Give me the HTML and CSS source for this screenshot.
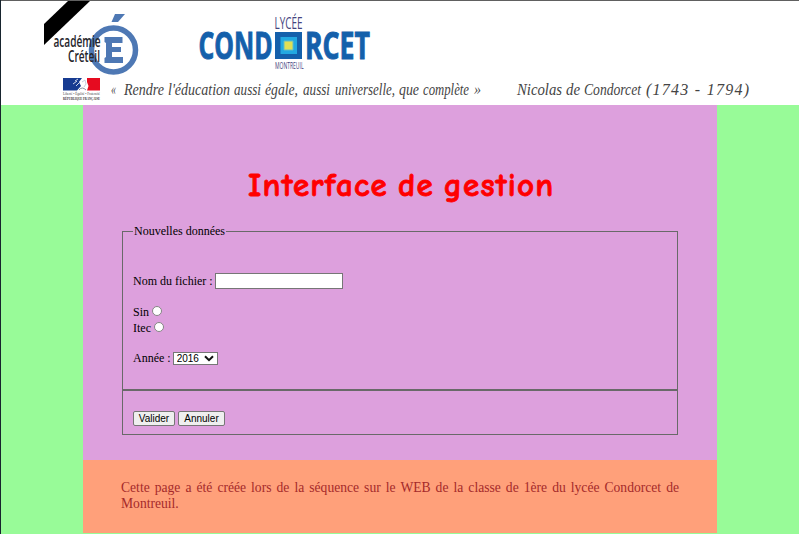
FILE: index.html
```html
<!DOCTYPE html>
<html lang="fr">
<head>
<meta charset="utf-8">
<title>Interface de gestion</title>
<link rel="stylesheet" href="styles.css">
</head>
<body>
<header class="banner">
<svg class="banner-art" width="798" height="104" viewBox="1 1 798 104">
  <path d="M68 1H90L44 45V24Z" fill="#000"/>
  <circle cx="113.500" cy="50" r="22" fill="none" stroke="#4e78b4" stroke-width="5.500"/>
  <path d="M115 14H125L118 22H111.500Z" fill="#4e78b4"/>
  <path d="M104.500 37H122.500V43H112V47H121V52H112V57H123V63H104.500V58L106 57V43L104.500 42Z" fill="#4e78b4"/>
  <g class="academy">
    <text x="53.500" y="46.500" textLength="47" lengthAdjust="spacingAndGlyphs">académie</text>
    <text x="68" y="62" textLength="32" lengthAdjust="spacingAndGlyphs">Créteil</text>
  </g>
  <path d="M63 78H82L79 82L81 86L77 90.500H63Z" fill="#173b91"/>
  <path d="M87 78H100V90.500H87L88.500 86L87 82Z" fill="#e60b20"/>
  <path d="M78 79L75 81M77 81L73 84M79 83L76 86" stroke="#fff" stroke-width=".8"/>
  <path d="M82 82L85 80L86 84L84 87" stroke="#c7cddd" fill="none"/>
  <path d="M79 90Q82 86 86 90" stroke="#87909f" fill="none"/>
  <text class="motto" x="63" y="95" textLength="37" lengthAdjust="spacingAndGlyphs">Liberté • Égalité • Fraternité</text>
  <text class="republic" x="63" y="100" textLength="37" lengthAdjust="spacingAndGlyphs">RÉPUBLIQUE FRANÇAISE</text>
  <text class="school-small" font-size="16.500" x="274.500" y="28.500" textLength="28" lengthAdjust="spacingAndGlyphs">LYCÉE</text>
  <g class="school">
    <text transform="translate(198.500 59) scale(1 1.400)" textLength="74" lengthAdjust="spacingAndGlyphs">COND</text>
    <text transform="translate(305 59) scale(1 1.400)" textLength="65" lengthAdjust="spacingAndGlyphs">RCET</text>
  </g>
  <path d="M275 32H302V59H275Z" fill="#1460ab"/>
  <path d="M280.500 37H297V54H280.500Z" fill="#22a9e1"/>
  <path d="M284 41H293V50H284Z" fill="#dfdf54" stroke="#63bec5"/>
  <text class="school-small" font-size="8.500" x="275" y="68.500" textLength="28.500" lengthAdjust="spacingAndGlyphs">MONTREUIL</text>
  <g class="script">
    <text x="111" y="95" textLength="5" lengthAdjust="spacingAndGlyphs">«</text>
    <text x="124" y="95" textLength="40" lengthAdjust="spacingAndGlyphs">Rendre</text>
    <text x="168" y="95" textLength="62" lengthAdjust="spacingAndGlyphs">l'éducation</text>
    <text x="234" y="95" textLength="27" lengthAdjust="spacingAndGlyphs">aussi</text>
    <text x="265" y="95" textLength="33" lengthAdjust="spacingAndGlyphs">égale,</text>
    <text x="303" y="95" textLength="27" lengthAdjust="spacingAndGlyphs">aussi</text>
    <text x="335" y="95" textLength="60" lengthAdjust="spacingAndGlyphs">universelle,</text>
    <text x="399" y="95" textLength="20" lengthAdjust="spacingAndGlyphs">que</text>
    <text x="423" y="95" textLength="46" lengthAdjust="spacingAndGlyphs">complète</text>
    <text x="474" y="95" textLength="7" lengthAdjust="spacingAndGlyphs">»</text>
    <text x="517" y="95" textLength="45" lengthAdjust="spacingAndGlyphs">Nicolas</text>
    <text x="566" y="95" textLength="14" lengthAdjust="spacingAndGlyphs">de</text>
    <text x="584" y="95" textLength="57" lengthAdjust="spacingAndGlyphs">Condorcet</text>
    <text x="646" y="95" textLength="103" lengthAdjust="spacing">(1743 - 1794)</text>
  </g>
</svg>
</header>
<main class="content">
  <h1 class="title">Interface de gestion</h1>
  <form class="form">
    <fieldset class="data">
      <legend class="legend">Nouvelles données</legend>
      <div class="row file"><label for="file">Nom du fichier :</label><input class="text-input" id="file" type="text"></div>
      <div class="row"><label for="sin">Sin</label><input class="radio" id="sin" type="radio" name="section"></div>
      <div class="row"><label for="itec">Itec</label><input class="radio" id="itec" type="radio" name="section"></div>
      <div class="row year"><label for="year">Année :</label><div class="select-wrap"><select class="select" id="year"><option>2016</option></select><svg class="chevron" width="10" height="7" viewBox="0 0 10 7"><path d="M1 1.200L5 5.200L9 1.200" fill="none" stroke="#111" stroke-width="2"/></svg></div></div>
    </fieldset>
    <fieldset class="actions">
      <button class="button valid" type="button">Valider</button>
      <button class="button cancel" type="button">Annuler</button>
    </fieldset>
  </form>
</main>
<footer class="footer"><p class="note">Cette page a été créée lors de la séquence sur le WEB de la classe de 1ère du lycée Condorcet de Montreuil.</p></footer>
</body>
</html>
```
FILE: styles.css
```css
* { box-sizing: border-box; }
html { background: #98fb98; }
body {
  margin: 0;
  height: 534px;
  overflow: hidden;
  border-left: 1px solid #17242e;
  background: #98fb98;
  font: 12px/16px "Liberation Serif", serif;
  color: #000;
}
.banner { height: 105px; border-top: 1px solid #606060; background: #fff; }
.banner-art { display: block; }
.academy { font: 600 15.5px "Open Sans", sans-serif; fill: #25252b; }
.motto { font: 3.5px "Liberation Serif", serif; fill: #444; }
.republic { font: bold 4.5px "Liberation Serif", serif; fill: #333; }
.school { font: bold 27px "Open Sans", sans-serif; fill: #1460ab; stroke: #1460ab; stroke-width: .7px; }
.school-small { font-family: "Open Sans", sans-serif; fill: #45447e; }
.script { font: italic 16px "Zapfino", "Z003", "URW Chancery L", "Apple Chancery", "Liberation Serif", serif; fill: #444; }
.content {
  width: 634px;
  height: 355px;
  margin-left: 82px;
  padding: 60px 39px 0;
  background: #dda0dd;
}
.title {
  width: 304px;
  height: 40px;
  margin: 0 auto;
  font: bold 33px/40px "Comic Sans MS", "Comic Neue", "DejaVu Sans", sans-serif;
  letter-spacing: 1.2px;
  word-spacing: -3px;
  white-space: nowrap;
  color: red;
  -webkit-text-stroke: .8px red;
}
.form { padding-top: 18px; }
fieldset { width: 556px; margin: 0; border: 1px solid #696969; }
.data { height: 167px; padding: 34px 10px 0; }
.legend { height: 16px; padding: 0 1px; }
.row { display: flex; align-items: center; height: 16px; }
.file { margin-bottom: 15px; gap: 2px; }
.text-input { width: 128px; height: 16px; padding: 0; border: 1px solid #767676; background: #fff; }
.radio { appearance: none; width: 10px; height: 10px; margin: 0 0 2px 3px; border: 1px solid #858585; border-radius: 50%; background: #fff; }
.year { margin-top: 14px; gap: 2px; }
.select-wrap { position: relative; display: flex; }
.select { appearance: none; width: 45px; height: 13px; padding: 0 3px; border: 1px solid #767676; border-radius: 0; background: #fff; font: 10px/11px "Liberation Sans", sans-serif; color: #000; }
.chevron { position: absolute; right: 4px; top: 3px; pointer-events: none; }
.actions { display: flex; gap: 3px; height: 45px; padding: 20px 10px 0; }
.button { height: 15px; padding: 0; border: 1px solid #767676; border-radius: 2px; background: #efefef; font: 10px/13px "Liberation Sans", sans-serif; color: #000; }
.valid { width: 42px; }
.cancel { width: 47px; }
.footer { width: 634px; height: 73px; margin-left: 82px; padding: 20px 38px 0; background: #ffa07a; }
.note { margin: 0; font-size: 13.6px; line-height: 16px; text-align: justify; color: #a52a2a; }
```
